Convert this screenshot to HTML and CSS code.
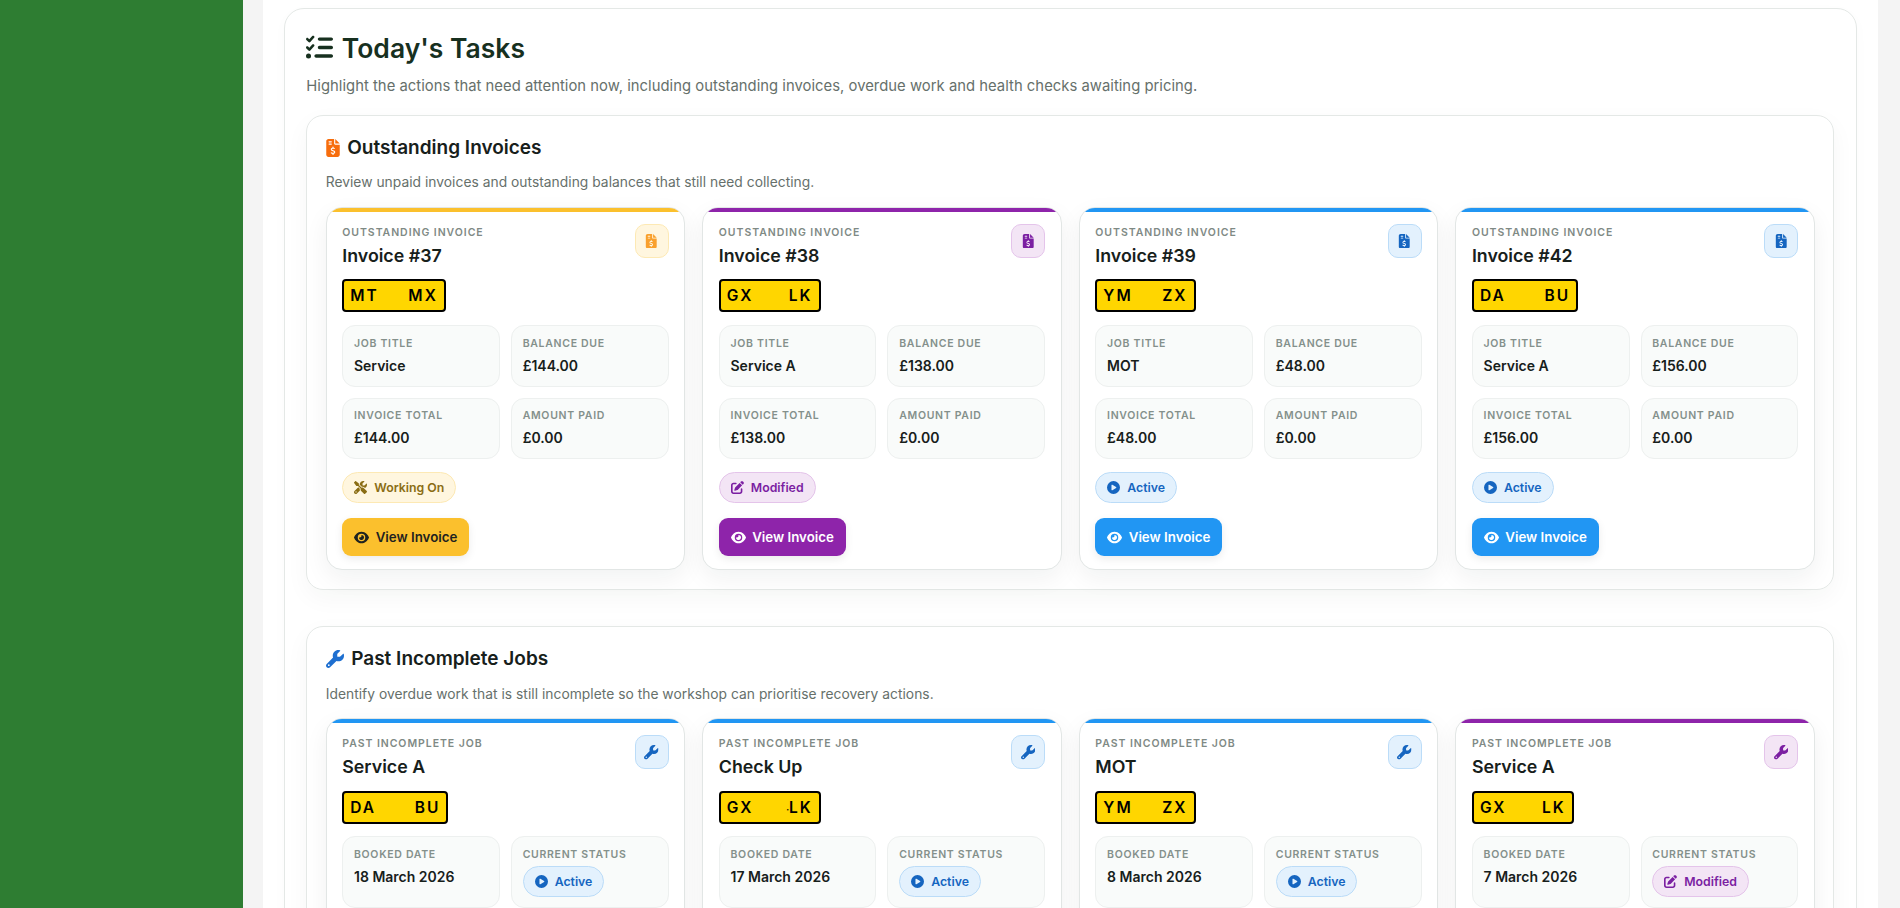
FILE: index.html
```html
<!DOCTYPE html>
<html lang="en">

<head>
    <meta charset="UTF-8">
    <meta name="viewport" content="width=device-width, initial-scale=1.0">
    <title>Today's Tasks</title>
    <link rel="stylesheet" href="styles.css">
</head>

<body>
    <svg class="icon-defs" xmlns="http://www.w3.org/2000/svg">
        <symbol id="i-list" viewBox="0 0 512 512"><path d="M152.1 38.2c9.9 8.9 10.7 24 1.8 33.9l-72 80c-4.4 4.9-10.6 7.8-17.2 7.9s-12.9-2.4-17.6-7L7 113C-2.3 103.6-2.3 88.4 7 79s24.6-9.4 33.9 0l22.1 22.1 55.1-61.2c8.9-9.9 24-10.7 33.9-1.8zm0 160c9.9 8.9 10.7 24 1.8 33.9l-72 80c-4.4 4.9-10.6 7.8-17.2 7.9s-12.9-2.4-17.6-7L7 273c-9.4-9.4-9.4-24.6 0-33.9s24.6-9.4 33.9 0l22.1 22.1 55.1-61.2c8.9-9.9 24-10.7 33.9-1.8zM224 96c0-17.7 14.3-32 32-32H480c17.7 0 32 14.3 32 32s-14.3 32-32 32H256c-17.7 0-32-14.3-32-32zm0 160c0-17.7 14.3-32 32-32H480c17.7 0 32 14.3 32 32s-14.3 32-32 32H256c-17.7 0-32-14.3-32-32zM160 416c0-17.7 14.3-32 32-32H480c17.7 0 32 14.3 32 32s-14.3 32-32 32H192c-17.7 0-32-14.3-32-32zM48 368a48 48 0 1 1 0 96 48 48 0 1 1 0-96z"/></symbol>
        <symbol id="i-invoice" viewBox="0 0 384 512"><path d="M64 0C28.7 0 0 28.7 0 64V448c0 35.3 28.7 64 64 64H320c35.3 0 64-28.7 64-64V160H256c-17.7 0-32-14.3-32-32V0H64zM256 0V128H384L256 0zM64 80c0-8.8 7.2-16 16-16h64c8.8 0 16 7.2 16 16s-7.2 16-16 16H80c-8.8 0-16-7.2-16-16zm0 64c0-8.8 7.2-16 16-16h64c8.8 0 16 7.2 16 16s-7.2 16-16 16H80c-8.8 0-16-7.2-16-16zm128 72c8.8 0 16 7.2 16 16v17.3c8.5 1.2 16.7 3.1 24.1 5.1c8.5 2.3 13.6 11 11.3 19.6s-11 13.6-19.6 11.3c-11.1-3-22-5.2-32.1-5.3c-8.4-.1-17.4 1.8-23.6 5.5c-5.7 3.4-8.1 7.3-8.1 12.8c0 3.7 1.3 6.5 7.3 10.1c6.9 4.1 16.6 7.1 29.2 10.9l.5 .1 0 0 0 0c11.3 3.4 25.3 7.6 36.3 14.6c12.1 7.6 22.4 19.7 22.7 38.2c.3 19.3-9.6 33.3-22.9 41.6c-7.7 4.8-16.4 7.6-25.1 9.1V440c0 8.8-7.2 16-16 16s-16-7.2-16-16V422.2c-11.2-2.1-21.7-5.7-30.9-8.9l0 0 0 0c-2.1-.7-4.2-1.4-6.2-2.1c-8.4-2.8-12.9-11.9-10.1-20.2s11.9-12.9 20.2-10.1c2.5 .8 4.8 1.6 7.1 2.4l0 0 0 0 0 0c13.6 4.6 24.6 8.4 36.3 8.7c9.1 .3 17.9-1.7 23.7-5.3c5.1-3.2 7.9-7.3 7.8-14c-.1-4.6-1.8-7.8-7.7-11.6c-6.8-4.3-16.5-7.4-29-11.2l-1.6-.5 0 0c-11-3.3-24.3-7.3-34.8-13.7c-12-7.3-22.6-19-22.7-37.4c-.1-19.4 10.8-32.8 23.8-40.5c7.5-4.4 15.8-7.2 24.1-8.7V232c0-8.8 7.2-16 16-16z"/></symbol>
        <symbol id="i-wrench" viewBox="0 0 512 512"><path d="M352 320c88.4 0 160-71.6 160-160c0-15.3-2.2-30.1-6.2-44.2c-3.1-10.8-16.4-13.2-24.3-5.3l-76.8 76.8c-3 3-7.1 4.7-11.3 4.7H336c-8.8 0-16-7.2-16-16V118.6c0-4.2 1.7-8.3 4.7-11.3l76.8-76.8c7.9-7.9 5.4-21.2-5.3-24.3C382.1 2.2 367.3 0 352 0C263.6 0 192 71.6 192 160c0 19.1 3.4 37.5 9.5 54.5L19.9 396.1C7.2 408.8 0 426.1 0 444.1C0 481.6 30.4 512 67.9 512c18 0 35.3-7.2 48-19.9L297.5 310.5c17 6.2 35.4 9.5 54.5 9.5zM80 408a24 24 0 1 1 0 48 24 24 0 1 1 0-48z"/></symbol>
        <symbol id="i-tools" viewBox="0 0 512 512"><path d="M78.6 5C69.1-2.4 55.6-1.5 47 7L7 47c-8.5 8.5-9.4 22-2.1 31.6l80 104c4.5 5.9 11.6 9.4 19 9.4h54.1l109 109c-14.7 29-10 65.4 14.3 89.6l112 112c12.5 12.5 32.8 12.5 45.3 0l64-64c12.5-12.5 12.5-32.8 0-45.3l-112-112c-24.2-24.2-60.6-29-89.6-14.3l-109-109V104c0-7.5-3.5-14.5-9.4-19L78.6 5zM19.9 396.1C7.2 408.8 0 426.1 0 444.1C0 481.6 30.4 512 67.9 512c18 0 35.3-7.2 48-19.9L233.7 374.3c-7.8-20.9-9-43.6-3.6-65.1l-61.7-61.7L19.9 396.1zM512 144c0-10.5-1.1-20.7-3.2-30.5c-2.4-11.2-16.1-14.1-24.2-6l-63.9 63.9c-3 3-7.1 4.7-11.3 4.7H352c-8.8 0-16-7.2-16-16V102.6c0-4.2 1.7-8.3 4.7-11.3l63.9-63.9c8.1-8.1 5.2-21.8-6-24.2C388.7 1.1 378.5 0 368 0C288.5 0 224 64.5 224 144l0 .8 85.3 85.3c36-9.1 75.8 .5 104 28.7L429 274.5c49-23 83-72.8 83-130.5zM56 432a24 24 0 1 1 48 0 24 24 0 1 1 -48 0z"/></symbol>
        <symbol id="i-pen" viewBox="0 0 512 512"><path d="M471.6 21.7c-21.9-21.9-57.3-21.9-79.2 0L362.3 51.7l97.9 97.9 30.1-30.1c21.9-21.9 21.9-57.3 0-79.2L471.6 21.7zm-299.2 220c-6.1 6.1-10.8 13.6-13.5 21.9l-29.6 88.8c-2.9 8.6-.6 18.1 5.8 24.6s15.9 8.7 24.6 5.8l88.8-29.6c8.2-2.7 15.7-7.4 21.9-13.5L437.7 172.3 339.7 74.3 172.4 241.7zM96 64C43 64 0 107 0 160V416c0 53 43 96 96 96H352c53 0 96-43 96-96V320c0-17.7-14.3-32-32-32s-32 14.3-32 32v96c0 17.7-14.3 32-32 32H96c-17.7 0-32-14.3-32-32V160c0-17.7 14.3-32 32-32h96c17.7 0 32-14.3 32-32s-14.3-32-32-32H96z"/></symbol>
        <symbol id="i-play" viewBox="0 0 512 512"><path d="M0 256a256 256 0 1 1 512 0A256 256 0 1 1 0 256zM188.3 147.1c-7.6 4.2-12.3 12.3-12.3 20.9V344c0 8.7 4.7 16.7 12.3 20.9s16.8 4.1 24.3-.5l144-88c7.1-4.4 11.5-12.1 11.5-20.5s-4.4-16.1-11.5-20.5l-144-88c-7.4-4.5-16.7-4.7-24.3-.5z"/></symbol>
        <symbol id="i-eye" viewBox="0 0 576 512"><path d="M288 32c-80.8 0-145.5 36.8-192.6 80.6C48.6 156 17.3 208 2.5 243.7c-3.3 7.9-3.3 16.7 0 24.6C17.3 304 48.6 356 95.4 399.4C142.5 443.2 207.2 480 288 480s145.5-36.8 192.6-80.6c46.8-43.5 78.1-95.4 93-131.1c3.3-7.9 3.3-16.7 0-24.6c-14.9-35.7-46.2-87.7-93-131.1C433.5 68.8 368.8 32 288 32zM144 256a144 144 0 1 1 288 0 144 144 0 1 1 -288 0zm144-64c0 35.3-28.7 64-64 64c-7.1 0-13.9-1.2-20.3-3.3c-5.5-1.8-11.9 1.6-11.7 7.4c.3 6.9 1.3 13.8 3.2 20.7c13.7 51.2 66.4 81.6 117.6 67.9s81.6-66.4 67.9-117.6c-11.1-41.5-47.8-69.4-88.6-71.1c-5.8-.2-9.2 6.1-7.4 11.7c2.1 6.4 3.3 13.2 3.3 20.3z"/></symbol>
    </svg>

    <aside class="sidebar"></aside>

    <main class="content">
        <div class="panel">
            <section class="tasks">
                <h1 class="tasks-title"><svg class="tasks-icon"><use href="#i-list"/></svg>Today's Tasks</h1>
                <p class="tasks-desc">Highlight the actions that need attention now, including outstanding invoices, overdue work and health checks awaiting pricing.</p>

                <section class="group">
                    <h2 class="group-title"><svg class="group-icon orange"><use href="#i-invoice"/></svg>Outstanding Invoices</h2>
                    <p class="group-desc">Review unpaid invoices and outstanding balances that still need collecting.</p>
                    <div class="card-row">

                        <article class="card amber">
                            <div class="card-head">
                                <div>
                                    <div class="eyebrow">Outstanding Invoice</div>
                                    <h3 class="card-title">Invoice #37</h3>
                                </div>
                                <span class="card-icon"><svg><use href="#i-invoice"/></svg></span>
                            </div>
                            <div class="plate">MT     MX</div>
                            <div class="tiles">
                                <div class="tile"><div class="tile-label">Job Title</div><div class="tile-value">Service</div></div>
                                <div class="tile"><div class="tile-label">Balance Due</div><div class="tile-value">£144.00</div></div>
                                <div class="tile"><div class="tile-label">Invoice Total</div><div class="tile-value">£144.00</div></div>
                                <div class="tile"><div class="tile-label">Amount Paid</div><div class="tile-value">£0.00</div></div>
                            </div>
                            <span class="pill"><svg><use href="#i-tools"/></svg>Working On</span>
                            <a class="btn" href="#"><svg><use href="#i-eye"/></svg>View Invoice</a>
                        </article>

                        <article class="card purple">
                            <div class="card-head">
                                <div>
                                    <div class="eyebrow">Outstanding Invoice</div>
                                    <h3 class="card-title">Invoice #38</h3>
                                </div>
                                <span class="card-icon"><svg><use href="#i-invoice"/></svg></span>
                            </div>
                            <div class="plate">GX      LK</div>
                            <div class="tiles">
                                <div class="tile"><div class="tile-label">Job Title</div><div class="tile-value">Service A</div></div>
                                <div class="tile"><div class="tile-label">Balance Due</div><div class="tile-value">£138.00</div></div>
                                <div class="tile"><div class="tile-label">Invoice Total</div><div class="tile-value">£138.00</div></div>
                                <div class="tile"><div class="tile-label">Amount Paid</div><div class="tile-value">£0.00</div></div>
                            </div>
                            <span class="pill"><svg><use href="#i-pen"/></svg>Modified</span>
                            <a class="btn" href="#"><svg><use href="#i-eye"/></svg>View Invoice</a>
                        </article>

                        <article class="card blue">
                            <div class="card-head">
                                <div>
                                    <div class="eyebrow">Outstanding Invoice</div>
                                    <h3 class="card-title">Invoice #39</h3>
                                </div>
                                <span class="card-icon"><svg><use href="#i-invoice"/></svg></span>
                            </div>
                            <div class="plate">YM     ZX</div>
                            <div class="tiles">
                                <div class="tile"><div class="tile-label">Job Title</div><div class="tile-value">MOT</div></div>
                                <div class="tile"><div class="tile-label">Balance Due</div><div class="tile-value">£48.00</div></div>
                                <div class="tile"><div class="tile-label">Invoice Total</div><div class="tile-value">£48.00</div></div>
                                <div class="tile"><div class="tile-label">Amount Paid</div><div class="tile-value">£0.00</div></div>
                            </div>
                            <span class="pill"><svg><use href="#i-play"/></svg>Active</span>
                            <a class="btn" href="#"><svg><use href="#i-eye"/></svg>View Invoice</a>
                        </article>

                        <article class="card blue">
                            <div class="card-head">
                                <div>
                                    <div class="eyebrow">Outstanding Invoice</div>
                                    <h3 class="card-title">Invoice #42</h3>
                                </div>
                                <span class="card-icon"><svg><use href="#i-invoice"/></svg></span>
                            </div>
                            <div class="plate">DA      &#8202;BU</div>
                            <div class="tiles">
                                <div class="tile"><div class="tile-label">Job Title</div><div class="tile-value">Service A</div></div>
                                <div class="tile"><div class="tile-label">Balance Due</div><div class="tile-value">£156.00</div></div>
                                <div class="tile"><div class="tile-label">Invoice Total</div><div class="tile-value">£156.00</div></div>
                                <div class="tile"><div class="tile-label">Amount Paid</div><div class="tile-value">£0.00</div></div>
                            </div>
                            <span class="pill"><svg><use href="#i-play"/></svg>Active</span>
                            <a class="btn" href="#"><svg><use href="#i-eye"/></svg>View Invoice</a>
                        </article>

                    </div>
                </section>

                <section class="group">
                    <h2 class="group-title"><svg class="group-icon navy"><use href="#i-wrench"/></svg>Past Incomplete Jobs</h2>
                    <p class="group-desc">Identify overdue work that is still incomplete so the workshop can prioritise recovery actions.</p>
                    <div class="card-row">

                        <article class="card blue">
                            <div class="card-head">
                                <div>
                                    <div class="eyebrow">Past Incomplete Job</div>
                                    <h3 class="card-title">Service A</h3>
                                </div>
                                <span class="card-icon"><svg><use href="#i-wrench"/></svg></span>
                            </div>
                            <div class="plate">DA      &#8202;BU</div>
                            <div class="tiles">
                                <div class="tile"><div class="tile-label">Booked Date</div><div class="tile-value">18 March 2026</div></div>
                                <div class="tile"><div class="tile-label">Current Status</div><span class="pill"><svg><use href="#i-play"/></svg>Active</span></div>
                            </div>
                        </article>

                        <article class="card blue">
                            <div class="card-head">
                                <div>
                                    <div class="eyebrow">Past Incomplete Job</div>
                                    <h3 class="card-title">Check Up</h3>
                                </div>
                                <span class="card-icon"><svg><use href="#i-wrench"/></svg></span>
                            </div>
                            <div class="plate">GX     &#8202;<span class="plate-speck">·</span>LK</div>
                            <div class="tiles">
                                <div class="tile"><div class="tile-label">Booked Date</div><div class="tile-value">17 March 2026</div></div>
                                <div class="tile"><div class="tile-label">Current Status</div><span class="pill"><svg><use href="#i-play"/></svg>Active</span></div>
                            </div>
                        </article>

                        <article class="card blue">
                            <div class="card-head">
                                <div>
                                    <div class="eyebrow">Past Incomplete Job</div>
                                    <h3 class="card-title">MOT</h3>
                                </div>
                                <span class="card-icon"><svg><use href="#i-wrench"/></svg></span>
                            </div>
                            <div class="plate">YM     ZX</div>
                            <div class="tiles">
                                <div class="tile"><div class="tile-label">Booked Date</div><div class="tile-value">8 March 2026</div></div>
                                <div class="tile"><div class="tile-label">Current Status</div><span class="pill"><svg><use href="#i-play"/></svg>Active</span></div>
                            </div>
                        </article>

                        <article class="card purple">
                            <div class="card-head">
                                <div>
                                    <div class="eyebrow">Past Incomplete Job</div>
                                    <h3 class="card-title">Service A</h3>
                                </div>
                                <span class="card-icon"><svg><use href="#i-wrench"/></svg></span>
                            </div>
                            <div class="plate">GX      LK</div>
                            <div class="tiles">
                                <div class="tile"><div class="tile-label">Booked Date</div><div class="tile-value">7 March 2026</div></div>
                                <div class="tile"><div class="tile-label">Current Status</div><span class="pill"><svg><use href="#i-pen"/></svg>Modified</span></div>
                            </div>
                        </article>

                    </div>
                </section>
            </section>
        </div>
    </main>
</body>

</html>
```

FILE: styles.css
```css
html,
body {
    margin: 0;
    height: 908px;
    overflow: hidden;
}

body {
    display: flex;
    font-family: Inter, "Noto Sans", sans-serif;
    background-color: #f4f4f4;
    color: #17201b;
}

.icon-defs {
    display: none;
}

svg {
    fill: currentColor;
    flex: none;
}

.sidebar {
    width: 243px;
    flex: none;
    background-color: #2e7d32;
}

.content {
    flex: 1;
    padding: 0 22px 0 19.5px;
    min-width: 0;
}

.panel {
    background-color: #fff;
    padding: 7.5px 21px 0 21px;
    height: 100%;
    box-sizing: border-box;
}

.tasks {
    border: 1px solid #e4e8e6;
    border-radius: 20px;
    padding: 22px 21.8px 0;
    box-shadow: 0 4px 16px rgba(0, 0, 0, 0.02);
}

.tasks-title {
    display: flex;
    align-items: center;
    gap: 8.5px;
    margin: 0;
    font-size: 26.5px;
    line-height: 34px;
    font-weight: 600;
    color: #17301f;
}

.tasks-icon {
    width: 27px;
    height: 27px;
}

.tasks-desc {
    margin: 11.5px 0 19px;
    font-size: 14.8px;
    line-height: 20px;
    letter-spacing: 0.03px;
    color: #66706b;
}

.group {
    border: 1px solid #e4e8e6;
    border-radius: 17px;
    padding: 18.6px 18.4px 19px;
    margin-bottom: 36.3px;
    box-shadow: 0 8px 24px rgba(20, 40, 30, 0.04);
}

.group-title {
    display: flex;
    align-items: center;
    gap: 7.5px;
    margin: 0;
    font-size: 19px;
    line-height: 26px;
    font-weight: 600;
    color: #17201b;
}

.group-icon {
    width: 18px;
    height: 18px;
}

.group-icon.orange {
    width: 14px;
    color: #f76d0c;
}

.group-icon.navy {
    color: #1e6fd0;
}

.group-desc {
    margin: 12.7px 0 14.7px;
    font-size: 13.8px;
    line-height: 19px;
    letter-spacing: 0.03px;
    color: #66706b;
}

.card-row {
    display: grid;
    grid-template-columns: repeat(4, 1fr);
    gap: 17px;
}

.card {
    --accent: #2196f3;
    --accent-text: #fff;
    --soft: #e3f1fd;
    --line: #bbdcf8;
    --deep: #1565c0;
    position: relative;
    overflow: hidden;
    background-color: #fff;
    border: 1px solid #e2e6e5;
    border-radius: 16px;
    padding: 18px 15.6px 13px;
    box-shadow: 0 8px 24px rgba(20, 40, 30, 0.06);
    display: flex;
    flex-direction: column;
    align-items: flex-start;
}

/* coloured strip along the top of each card */
.card::before {
    content: "";
    position: absolute;
    left: 0;
    right: 0;
    top: 0;
    height: 4px;
    background-color: var(--accent);
}

.card.amber {
    --accent: #fbc02d;
    --accent-text: #1f2320;
    --soft: #fff6df;
    --line: #fde9b4;
    --deep: #f9a02d;
}

.card.purple {
    --accent: #8e24aa;
    --soft: #f3e5f5;
    --line: #e4c4ea;
    --deep: #7b1fa2;
}

.card-head {
    display: flex;
    justify-content: space-between;
    align-items: flex-start;
    align-self: stretch;
}

.eyebrow {
    font-size: 10.5px;
    line-height: 13px;
    font-weight: 600;
    letter-spacing: 0.95px;
    text-transform: uppercase;
    color: #7f8a85;
}

.card-title {
    margin: 4px 0 0;
    font-size: 17.8px;
    line-height: 26px;
    font-weight: 600;
    color: #17201b;
}

.card-icon {
    display: flex;
    align-items: center;
    justify-content: center;
    width: 34px;
    height: 34px;
    margin-top: -2px;
    box-sizing: border-box;
    background-color: var(--soft);
    border: 1px solid var(--line);
    border-radius: 10px;
    color: var(--deep);
}

.card-icon svg {
    width: 14.5px;
    height: 14.5px;
}

.plate {
    box-sizing: border-box;
    height: 33px;
    margin-top: 10.5px;
    padding: 0 6px;
    background-color: #ffd600;
    border: 2px solid #000;
    border-radius: 4px;
    color: #000;
    font-size: 15.5px;
    line-height: 29px;
    font-weight: 600;
    letter-spacing: 2px;
    white-space: pre;
}

.plate-speck {
    letter-spacing: 0;
    font-size: 9px;
}

.tiles {
    display: grid;
    grid-template-columns: 1fr 1fr;
    gap: 11px;
    align-self: stretch;
    margin-top: 12.5px;
    margin-bottom: 13px;
}

.tile {
    box-sizing: border-box;
    min-height: 61.5px;
    padding: 10.7px 10.7px 10px;
    background-color: #f9fbfa;
    border: 1px solid #edf0ef;
    border-radius: 13px;
}

.tile-label {
    font-size: 10.5px;
    line-height: 14px;
    font-weight: 600;
    letter-spacing: 0.7px;
    text-transform: uppercase;
    color: #84908b;
}

.tile-value {
    margin-top: 5px;
    font-size: 14px;
    line-height: 20px;
    font-weight: 600;
    color: #17201b;
}

.pill {
    display: inline-flex;
    align-items: center;
    gap: 7px;
    box-sizing: border-box;
    height: 31px;
    padding: 0 11px;
    background-color: var(--soft);
    border: 1px solid var(--line);
    border-radius: 16px;
    color: var(--deep);
    font-size: 12.3px;
    font-weight: 600;
}

.pill svg {
    width: 13px;
    height: 13px;
}

.tile .pill {
    margin-top: 4.5px;
    height: 30.5px;
}

.amber .pill {
    color: #8a6d14;
}

.btn {
    display: inline-flex;
    align-items: center;
    gap: 6.7px;
    box-sizing: border-box;
    height: 38px;
    margin-top: 14.7px;
    padding: 0 11.7px;
    background-color: var(--accent);
    border-radius: 9px;
    color: var(--accent-text);
    font-size: 13.3px;
    font-weight: 600;
    text-decoration: none;
    box-shadow: 0 3px 8px rgba(0, 0, 0, 0.08);
}

.btn svg {
    width: 15px;
    height: 15px;
}
```
